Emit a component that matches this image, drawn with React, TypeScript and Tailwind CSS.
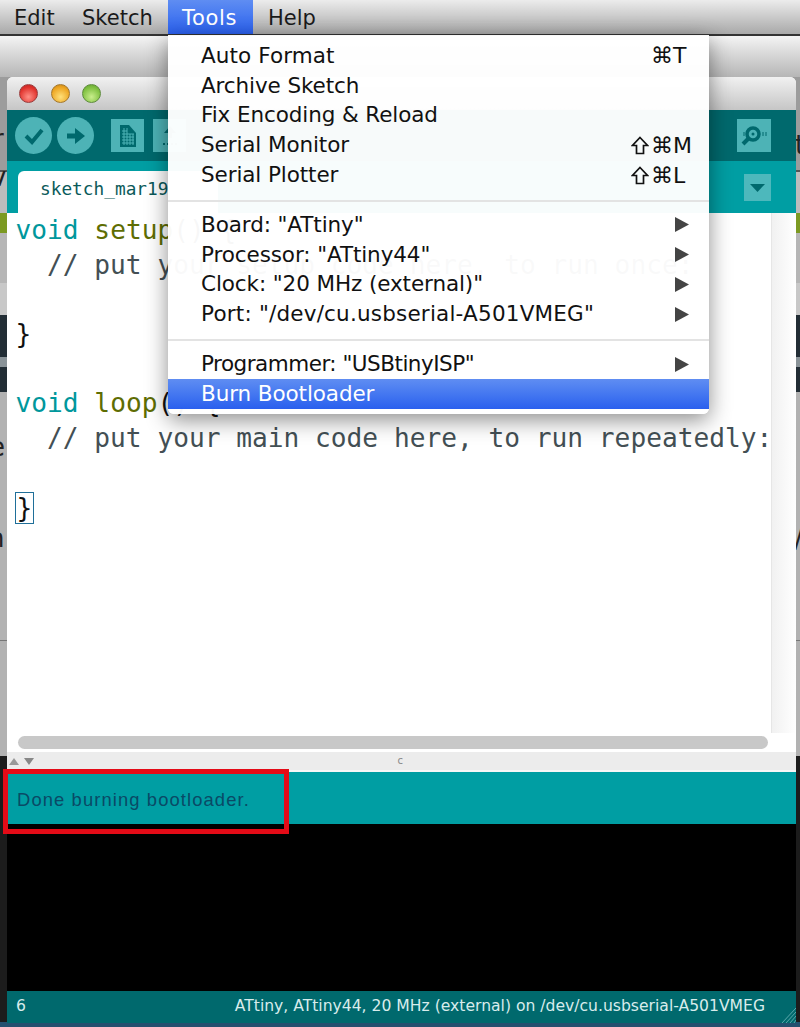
import type { ReactNode } from "react";

const uiFont = "font-['DejaVu_Sans',sans-serif]";
const monoFont = "font-['DejaVu_Sans_Mono',monospace]";

type MenuItem = { label: string; shortcut?: string; shift?: boolean; submenu?: boolean; active?: boolean; tracking?: string };

const groups: MenuItem[][] = [
    [
        { label: "Auto Format", shortcut: "⌘T", tracking: "tracking-[0.1px]" },
        { label: "Archive Sketch" },
        { label: "Fix Encoding & Reload" },
        { label: "Serial Monitor", shortcut: "⌘M", shift: true },
        { label: "Serial Plotter", shortcut: "⌘L", shift: true },
    ],
    [
        { label: 'Board: "ATtiny"', submenu: true },
        { label: 'Processor: "ATtiny44"', submenu: true },
        { label: 'Clock: "20 MHz (external)"', submenu: true },
        { label: 'Port: "/dev/cu.usbserial-A501VMEG"', submenu: true, tracking: "tracking-[0.2px]" },
    ],
    [
        { label: 'Programmer: "USBtinyISP"', submenu: true, tracking: "tracking-[-0.5px]" },
        { label: "Burn Bootloader", active: true },
    ],
];

const ShiftGlyph = () => (
    <svg width="18" height="19" viewBox="0 0 18 19" className="mr-[2px] shrink-0">
        <path d="M9 1.5 L16.5 9.5 H12.5 V17.5 H5.5 V9.5 H1.5 Z" fill="none" stroke="#111" strokeWidth="1.7" />
    </svg>
);

const MenuRow = ({ item }: { item: MenuItem }) => (
    <div
        className={`flex h-[29.8px] items-center justify-between pl-[33px] pr-[18px] text-[21.5px] ${item.tracking ?? "tracking-[-0.1px]"} ${
            item.active ? "bg-gradient-to-b from-[#5f8df2] to-[#2a5fee] text-white" : "text-[#111]"
        }`}
    >
        <span>{item.label}</span>
        {item.shortcut && (
            <span className="flex w-[62px] items-center pl-[22px] text-[22px] tracking-normal">
                {item.shift && (
                    <span className="-ml-[20px]">
                        <ShiftGlyph />
                    </span>
                )}
                {item.shortcut}
            </span>
        )}
        {item.submenu && (
            <svg width="14" height="15" viewBox="0 0 14 15" className="mr-[2px]">
                <polygon points="0,0 14,7.5 0,15" fill="#444" />
            </svg>
        )}
    </div>
);

const ToolSquare = ({ children, className }: { children: ReactNode; className: string }) => (
    <div className={`flex items-center justify-center bg-[#4db3b6] ${className}`}>{children}</div>
);

const Circle = ({ children }: { children: ReactNode }) => (
    <div className="flex h-[37px] w-[37px] items-center justify-center rounded-full bg-[#4db3b6]">{children}</div>
);

const code: { text: ReactNode }[] = [
    {
        text: (
            <>
                <span className="text-[#00979c]">void</span> <span className="text-[#5e6d03]">setup</span>() {"{"}
            </>
        ),
    },
    { text: <span className="text-[#434f54]">{"  // put your setup code here, to run once:"}</span> },
    { text: " " },
    { text: "}" },
    { text: " " },
    {
        text: (
            <>
                <span className="text-[#00979c]">void</span> <span className="text-[#5e6d03]">loop</span>() {"{"}
            </>
        ),
    },
    { text: <span className="text-[#434f54]">{"  // put your main code here, to run repeatedly:"}</span> },
    { text: " " },
    {
        text: <span className="-ml-px border-[1.5px] border-[#1f6f99] pl-px pr-px">{"}"}</span>,
    },
];

const StripLetter = ({ className, children }: { className: string; children: string }) => (
    <span className={`absolute text-[26px] leading-none text-[#222] ${uiFont} ${className}`}>{children}</span>
);

export default function App() {
    return (
        <div className={`relative flex h-[1027px] w-[800px] flex-col overflow-hidden bg-[#b4b4b4] ${uiFont}`}>
            {/* menu bar */}
            <div className="flex h-[36px] shrink-0 items-stretch border-b-2 border-[#333] bg-gradient-to-b from-[#ececec] to-[#a9a9a9] text-[21px] text-[#1a1a1a]">
                <span className="ml-[14px] w-[68px] leading-[37px]">Edit</span>
                <span className="w-[86px] leading-[37px]">Sketch</span>
                <span className="w-[85px] bg-gradient-to-b from-[#5f8df2] to-[#2a5fee] pl-[14px] leading-[37px] tracking-[0.7px] text-white">Tools</span>
                <span className="ml-[15px] leading-[37px]">Help</span>
            </div>

            {/* whatever sits behind the sketch window */}
            <div className="h-[41px] shrink-0 bg-gradient-to-b from-[#f4f4f4] to-[#b6b6b6]" />
            <div className="h-[93px] shrink-0 bg-[#9c9c9c]" />
            <div className="h-[2px] shrink-0 bg-[#555]" />
            <div className="h-[41px] shrink-0 bg-[#bcbcbc]" />
            <div className="h-[20px] shrink-0 bg-[#7c9a22]" />
            <div className="h-[50px] shrink-0 bg-[#b6b6b6]" />
            <div className="h-[32px] shrink-0 bg-[#c8c8c8]" />
            <div className="h-[42px] shrink-0 bg-[#222d35]" />
            <div className="h-[10px] shrink-0 bg-[#8a9398]" />
            <div className="h-[25px] shrink-0 bg-[#222d35]" />
            <div className="h-[248px] shrink-0 bg-[#b2b2b2]" />
            <div className="h-[1px] shrink-0 bg-[#777]" />
            <div className="h-[115px] shrink-0 bg-[#b2b2b2]" />
            <div className="min-h-0 grow bg-[#1c1c1c]" />
            <div className="h-[5px] shrink-0 bg-[#24506f]" />

            <StripLetter className="left-[-7px] top-[126px]">r</StripLetter>
            <StripLetter className="left-[-9px] top-[164px]">v</StripLetter>
            <StripLetter className="left-[-11px] top-[434px]">e</StripLetter>
            <StripLetter className="left-[-12px] top-[525px]">h</StripLetter>
            <StripLetter className="left-[795px] top-[132px]">t</StripLetter>
            <StripLetter className="left-[794px] top-[526px]">/</StripLetter>

            {/* sketch window */}
            <div className="absolute left-[7px] top-[77px] flex h-[946px] w-[789px] flex-col overflow-hidden rounded-t-[6px] bg-white">
                <div className="flex h-[33px] shrink-0 items-center gap-[12.5px] bg-gradient-to-b from-[#f1f1f1] to-[#c6c6c6] pl-[12px]">
                    <div className="h-[19px] w-[19px] rounded-full border border-[#9a3a3a] bg-[radial-gradient(circle_at_50%_70%,#ff8f86,#e0322c_65%,#b51e1e)]" />
                    <div className="h-[19px] w-[19px] rounded-full border border-[#a5772a] bg-[radial-gradient(circle_at_50%_70%,#ffe07a,#eda521_65%,#c07d12)]" />
                    <div className="h-[19px] w-[19px] rounded-full border border-[#5d8c3a] bg-[radial-gradient(circle_at_50%_70%,#c9ee8c,#7fc040_65%,#5c9a2a)]" />
                </div>

                {/* toolbar */}
                <div className="flex h-[51px] shrink-0 items-center bg-[#00696d] pl-[8px] pr-[25px]">
                    <Circle>
                        <svg width="22" height="18" viewBox="0 0 22 18">
                            <path d="M3 9 L9 15 L19 3" fill="none" stroke="#00696d" strokeWidth="4" />
                        </svg>
                    </Circle>
                    <div className="ml-[5px]">
                        <Circle>
                            <svg width="20" height="18" viewBox="0 0 20 18">
                                <path d="M1 6.5 H9 V1 L19 9 L9 17 V11.5 H1 Z" fill="#00696d" />
                            </svg>
                        </Circle>
                    </div>
                    <ToolSquare className="ml-[17px] h-[33px] w-[33px]">
                        <svg width="18" height="22" viewBox="0 0 18 22">
                            <path d="M1 0 H10 L17 8 V22 H1 Z" fill="#00696d" />
                            <path d="M3 6 H8 M3 9 H15 M3 12 H15 M3 15 H15 M3 18 H15 M5 3 V20 M8 3 V20 M11 9 V20 M14 9 V20" fill="none" stroke="#4db3b6" strokeWidth="1" />
                        </svg>
                    </ToolSquare>
                    <ToolSquare className="ml-[9px] h-[33px] w-[33px]">
                        <svg width="16" height="24" viewBox="0 0 16 24">
                            <path d="M8 2 L14 9 H2 Z M6 9 H10 V14 H6 Z" fill="#00696d" />
                            <path d="M1 20 H15" stroke="#00696d" strokeWidth="2" strokeDasharray="2 2" />
                        </svg>
                    </ToolSquare>
                    <ToolSquare className="ml-auto h-[33px] w-[34px]">
                        <svg width="30" height="24" viewBox="0 0 30 24">
                            <circle cx="14" cy="10" r="6" fill="none" stroke="#00696d" strokeWidth="3.5" />
                            <circle cx="14" cy="10" r="1.5" fill="#00696d" />
                            <path d="M9.5 14.5 L4 20" stroke="#00696d" strokeWidth="4" />
                            <path d="M24 8 V12 M27 8 V12 M5 8 V12" stroke="#00696d" strokeWidth="1" />
                        </svg>
                    </ToolSquare>
                </div>

                {/* tab row */}
                <div className="flex h-[52px] shrink-0 items-end justify-between bg-[#009ea3] pl-[11px] pr-[25px]">
                    <div className={`h-[42px] w-[200px] rounded-tl-[6px] bg-white pl-[22px] text-[17.8px] leading-[36px] text-[#0b5a5a] ${monoFont}`}>
                        sketch_mar19
                    </div>
                    <div className="mb-[12px] flex h-[27px] w-[27px] items-center justify-center bg-[#4db8bc]">
                        <svg width="15" height="8" viewBox="0 0 15 8">
                            <polygon points="0,0 15,0 7.5,8" fill="#00696d" />
                        </svg>
                    </div>
                </div>

                {/* editor */}
                <div className="flex min-h-0 grow">
                    <pre className={`h-full min-w-0 grow overflow-hidden border-r border-[#e6e6e6] pl-[8.5px] text-[26.2px] leading-[34.7px] text-[#111] ${monoFont}`}>
                        {code.map((line, i) => (
                            <div key={i} className="h-[34.7px]">
                                {line.text}
                            </div>
                        ))}
                    </pre>
                    <div className="w-[24px] shrink-0 bg-gradient-to-r from-[#f1f1f1] to-white" />
                </div>

                {/* horizontal scrollbar */}
                <div className="flex h-[19px] shrink-0 items-center bg-white pl-[11px] pr-[28px]">
                    <div className="h-[13px] w-full rounded-full bg-[#c8c8c8]" />
                </div>

                {/* splitter */}
                <div className="flex h-[20px] shrink-0 items-center justify-between border-b-2 border-[#f7f7f7] bg-[#ececec] pl-[2px]">
                    <div className="flex gap-[5px]">
                        <div className="h-0 w-0 border-x-[5px] border-b-[7px] border-x-transparent border-b-[#999]" />
                        <div className="h-0 w-0 border-x-[5px] border-t-[7px] border-x-transparent border-t-[#888]" />
                    </div>
                    <span className="mr-[393px] text-[10px] leading-none text-[#888]">c</span>
                </div>

                {/* status */}
                <div className="flex h-[52px] shrink-0 items-center bg-[#009ea3] pl-[10px] pt-[3px] text-[18.4px] text-[#0a4a66]">
                    <span className="font-['Liberation_Sans',sans-serif] tracking-[1.1px]">Done burning bootloader.</span>
                </div>

                {/* console */}
                <div className="h-[167px] min-h-0 shrink-0 bg-black" />

                {/* footer */}
                <div className="relative flex h-[32px] shrink-0 items-center justify-between bg-[#00696d] pl-[9px] pr-[31px] text-[15.6px] text-[#d8ecec]">
                    <span>6</span>
                    <span>ATtiny, ATtiny44, 20 MHz (external) on /dev/cu.usbserial-A501VMEG</span>
                    <svg width="14" height="16" viewBox="0 0 14 16" className="absolute bottom-0 right-0">
                        <path d="M0 16 L14 1 M4 16 L14 5 M8 16 L14 9 M12 16 L14 13" stroke="#5aa7ab" strokeWidth="1" />
                    </svg>
                </div>
            </div>

            {/* open Tools menu */}
            <div className="absolute left-[168px] top-[35px] w-[541px] rounded-b-[6px] bg-white/97 pb-[5px] pt-[6px] shadow-[0_6px_22px_rgba(0,0,0,0.45)]">
                {groups.map((group, i) => (
                    <div key={i}>
                        {i > 0 && <div className="mb-[8px] mt-[10px] h-[2px] bg-[#e3e3e3]" />}
                        {group.map((item) => (
                            <MenuRow key={item.label} item={item} />
                        ))}
                    </div>
                ))}
            </div>

            {/* highlight box around the status message */}
            <div className="absolute left-[3px] top-[769px] h-[65px] w-[286px] border-[5px] border-[#e40b17]" />
        </div>
    );
}
